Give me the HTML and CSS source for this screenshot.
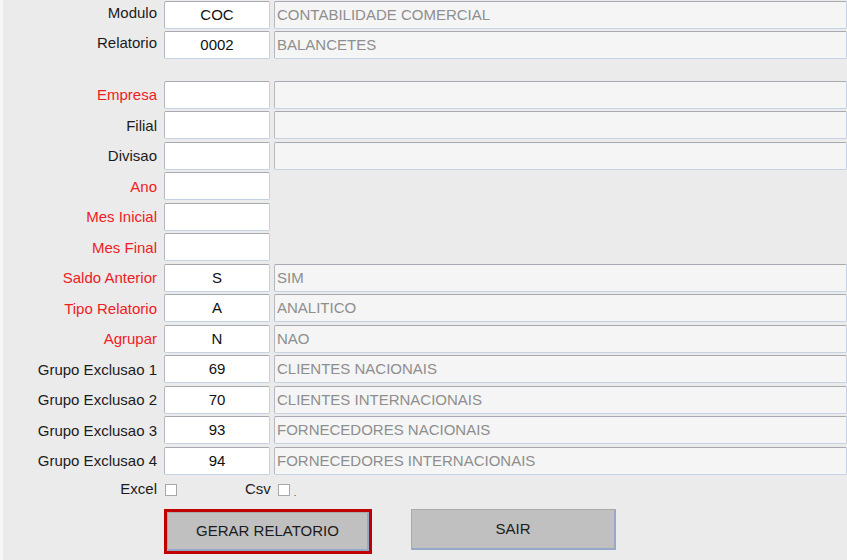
FILE: index.html
```html
<!DOCTYPE html>
<html lang="pt">
<head>
<meta charset="utf-8">
<title>Relatorio</title>
<link rel="stylesheet" href="styles.css">
</head>
<body>
<div class="page">
  <form class="form">
    <div class="row"><label class="lbl lbl-top">Modulo</label><div class="code">COC</div><div class="desc">CONTABILIDADE COMERCIAL</div></div>
    <div class="row row-second"><label class="lbl lbl-top">Relatorio</label><div class="code">0002</div><div class="desc">BALANCETES</div></div>
    <div class="spacer"></div>
    <div class="row"><label class="lbl req">Empresa</label><div class="code"></div><div class="desc"></div></div>
    <div class="row"><label class="lbl">Filial</label><div class="code"></div><div class="desc"></div></div>
    <div class="row"><label class="lbl">Divisao</label><div class="code"></div><div class="desc"></div></div>
    <div class="row"><label class="lbl req">Ano</label><div class="code"></div></div>
    <div class="row"><label class="lbl req">Mes Inicial</label><div class="code"></div></div>
    <div class="row"><label class="lbl req">Mes Final</label><div class="code"></div></div>
    <div class="row"><label class="lbl req">Saldo Anterior</label><div class="code">S</div><div class="desc">SIM</div></div>
    <div class="row"><label class="lbl req">Tipo Relatorio</label><div class="code">A</div><div class="desc">ANALITICO</div></div>
    <div class="row"><label class="lbl req">Agrupar</label><div class="code">N</div><div class="desc">NAO</div></div>
    <div class="row"><label class="lbl">Grupo Exclusao 1</label><div class="code">69</div><div class="desc">CLIENTES NACIONAIS</div></div>
    <div class="row"><label class="lbl">Grupo Exclusao 2</label><div class="code">70</div><div class="desc">CLIENTES INTERNACIONAIS</div></div>
    <div class="row"><label class="lbl">Grupo Exclusao 3</label><div class="code">93</div><div class="desc">FORNECEDORES NACIONAIS</div></div>
    <div class="row"><label class="lbl">Grupo Exclusao 4</label><div class="code">94</div><div class="desc">FORNECEDORES INTERNACIONAIS</div></div>
    <div class="checks">
      <span class="lbl chk-lbl">Excel</span><span class="box"></span>
      <span class="csv-lbl">Csv</span><span class="box"></span><span class="dot">.</span>
    </div>
    <div class="buttons">
      <div class="focus"><button type="button" class="btn btn-main">GERAR RELATORIO</button></div>
      <button type="button" class="btn btn-exit">SAIR</button>
    </div>
  </form>
</div>
</body>
</html>
```

FILE: styles.css
```css
* { box-sizing: border-box; }
html, body { margin: 0; padding: 0; }
body {
  background: #ebebeb;
  font-family: "Liberation Sans", Arial, sans-serif;
  font-size: 15px;
  color: #1b1b1b;
  width: 847px;
  height: 560px;
  overflow: hidden;
}
.page {
  border-left: 3px solid #f7f7f7;
  height: 560px;
  padding-top: 1px;
}
.form {
  display: flex;
  flex-direction: column;
  gap: 2.5px;
}
.row {
  display: flex;
  align-items: center;
  height: 28px;
}
.row-second { margin-top: -0.5px; }
.spacer { height: 16.5px; }
.lbl {
  width: 154px;
  text-align: right;
  margin-right: 7px;
  color: #1b1b1b;
  line-height: 17px;
}
.lbl-top { position: relative; top: -3px; }
.req { color: #ee1c24; }
.code, .desc {
  height: 28px;
  border: 1px solid #c4d2e4;
  border-top-color: #a6aab0;
  border-left-color: #b4bac2;
  border-radius: 2px;
  line-height: 26px;
  white-space: nowrap;
  overflow: hidden;
}
.code {
  width: 106px;
  background: #ffffff;
  text-align: center;
  color: #111;
}
.desc {
  width: 573px;
  margin-left: 4px;
  background: #f5f5f5;
  color: #8e8e8e;
  padding-left: 2px;
}
.checks {
  display: flex;
  align-items: center;
  height: 20px;
  margin-top: 1px;
}
.chk-lbl { margin-right: 8px; }
.box {
  width: 12px;
  height: 12px;
  background: #fff;
  border: 1px solid #a8a8a8;
  margin-top: 4px;
}
.csv-lbl { margin-left: 68px; margin-right: 7px; }
.dot { font-size: 9px; margin-left: 4px; margin-top: 10px; color: #333; }
.buttons {
  display: flex;
  align-items: flex-start;
  margin-top: 8px;
  padding-left: 161px;
}
.focus {
  border: 3px solid #c00000;
  width: 208px;
  height: 45px;
}
.btn {
  font-family: "Liberation Sans", Arial, sans-serif;
  font-size: 15px;
  color: #1b1b1b;
  background: #c0c0c0;
  border: 1px solid #a9a9a9;
  border-right: 2px solid #93a9c6;
  border-bottom: 2px solid #93a9c6;
  border-radius: 1px;
  padding: 0;
  cursor: pointer;
}
.btn-main {
  width: 202px;
  height: 39px;
  display: block;
}
.btn-exit {
  width: 205px;
  height: 41px;
  margin-left: 39px;
}
```
